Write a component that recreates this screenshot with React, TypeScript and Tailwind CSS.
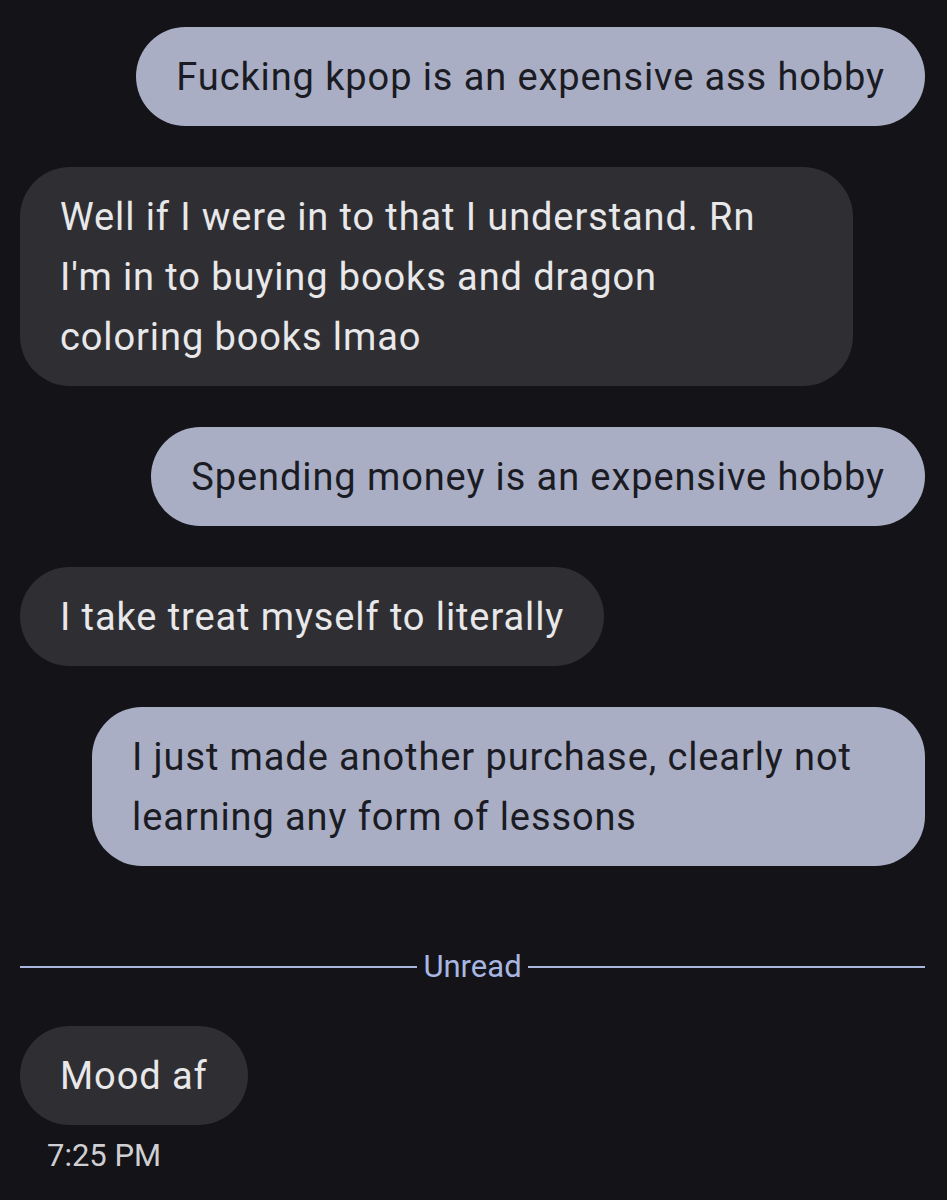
type Msg = { id: number; out: boolean; lines: string[] };

const messages: Msg[] = [
  { id: 1, out: true, lines: ['Fucking kpop is an expensive ass hobby'] },
  {
    id: 2,
    out: false,
    lines: ['Well if I were in to that I understand. Rn', "I'm in to buying books and dragon", 'coloring books lmao'],
  },
  { id: 3, out: true, lines: ['Spending money is an expensive hobby'] },
  { id: 4, out: false, lines: ['I take treat myself to literally'] },
  { id: 5, out: true, lines: ['I just made another purchase, clearly not', 'learning any form of lessons'] },
];

function Bubble({ msg }: { msg: Msg }) {
  const multi = msg.lines.length > 1;
  return (
    <div
      className={
        (msg.out ? 'self-end bg-[#a9aec4] text-[#1a1b23] ' : 'self-start bg-[#2f2f33] text-[#e8e8ea] ') +
        (multi ? 'w-[833px] ' : '') +
        'rounded-[50px] px-[40px] py-[19.5px] text-[38px] leading-[60px] tracking-[0.9px] whitespace-nowrap'
      }
    >
      {msg.lines.map((l, i) => (
        <div key={i}>{l}</div>
      ))}
    </div>
  );
}

export default function App() {
  return (
    <div
      className="min-h-[1200px] w-[947px] bg-[#131318] pl-[20px] pr-[22px] pt-[27px]"
      style={{ fontFamily: 'Roboto, "Noto Sans", sans-serif' }}
    >
      <div className="flex flex-col gap-[41px]">
        {messages.map((m) => (
          <Bubble key={m.id} msg={m} />
        ))}

        <div className="mt-[42px] flex h-[36px] items-center gap-[6px]">
          <div className="h-[2px] flex-1 bg-[#a9b6de]" />
          <span className="text-[31px] leading-[36px] text-[#a9b6e2]">Unread</span>
          <div className="h-[2px] flex-1 bg-[#a9b6de]" />
        </div>

        <div className="flex flex-col items-start">
          <Bubble msg={{ id: 6, out: false, lines: ['Mood af'] }} />
          <div className="mt-[14px] pl-[27px] text-[31px] leading-[34px] text-[#cfcfd3]">7:25 PM</div>
        </div>
      </div>
    </div>
  );
}
